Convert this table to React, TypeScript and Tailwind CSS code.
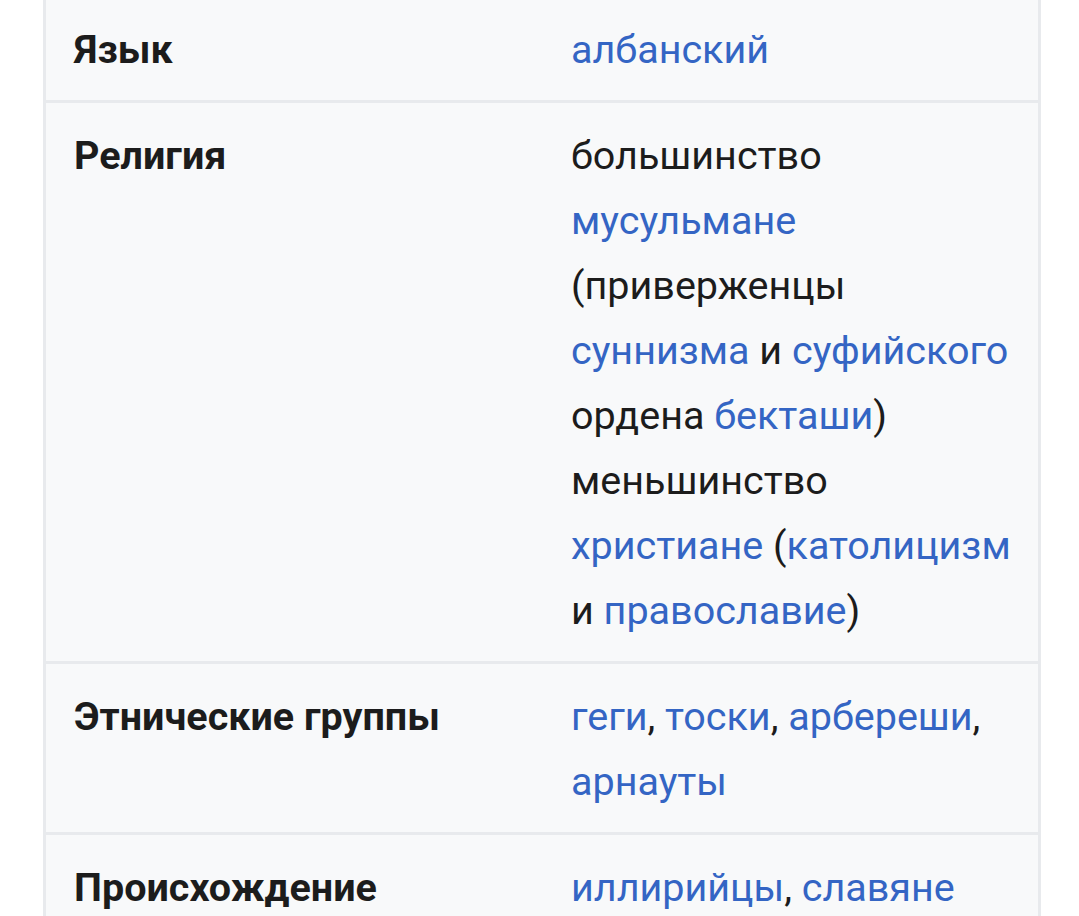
const link = 'text-[#3465c4]'

function Row({ label, children, first }: { label: string; children: React.ReactNode; first?: boolean }) {
  return (
    <div
      className={`flex border-b-[3px] border-[#e8eaed] ${first ? 'pt-[17px]' : 'pt-[20px]'} pb-[18px]`}
    >
      <div className="w-[525px] shrink-0 pl-[28px] font-bold text-[#1c1c1c]">{label}</div>
      <div className="flex-1 text-[#1c1c1c]">{children}</div>
    </div>
  )
}

export default function App() {
  return (
    <div
      className="min-h-[916px] bg-white overflow-hidden"
      style={{ fontFamily: 'Roboto, "Noto Sans", sans-serif' }}
    >
      <div className="ml-[43px] w-[998px] border-x-[3px] border-[#e8eaed] bg-[#f8f9fa] text-[39.5px] leading-[65px]">
        <Row label="Язык" first>
          <span className={link}>албанский</span>
        </Row>
        <Row label="Религия">
          <div className="whitespace-nowrap">большинство</div>
          <div className="whitespace-nowrap">
            <span className={link}>мусульмане</span>
          </div>
          <div className="whitespace-nowrap">(приверженцы</div>
          <div className="whitespace-nowrap">
            <span className={link}>суннизма</span> и <span className={link}>суфийского</span>
          </div>
          <div className="whitespace-nowrap">
            ордена <span className={link}>бекташи</span>)
          </div>
          <div className="whitespace-nowrap">меньшинство</div>
          <div className="whitespace-nowrap">
            <span className={link}>христиане</span> (<span className={link}>католицизм</span>
          </div>
          <div className="whitespace-nowrap">
            и <span className={link}>православие</span>)
          </div>
        </Row>
        <Row label="Этнические группы">
          <div className="whitespace-nowrap">
            <span className={link}>геги</span>, <span className={link}>тоски</span>,{' '}
            <span className={link}>арбереши</span>,
          </div>
          <div className="whitespace-nowrap">
            <span className={link}>арнауты</span>
          </div>
        </Row>
        <Row label="Происхождение">
          <div className="whitespace-nowrap">
            <span className={link}>иллирийцы</span>, <span className={link}>славяне</span>
          </div>
        </Row>
      </div>
    </div>
  )
}
